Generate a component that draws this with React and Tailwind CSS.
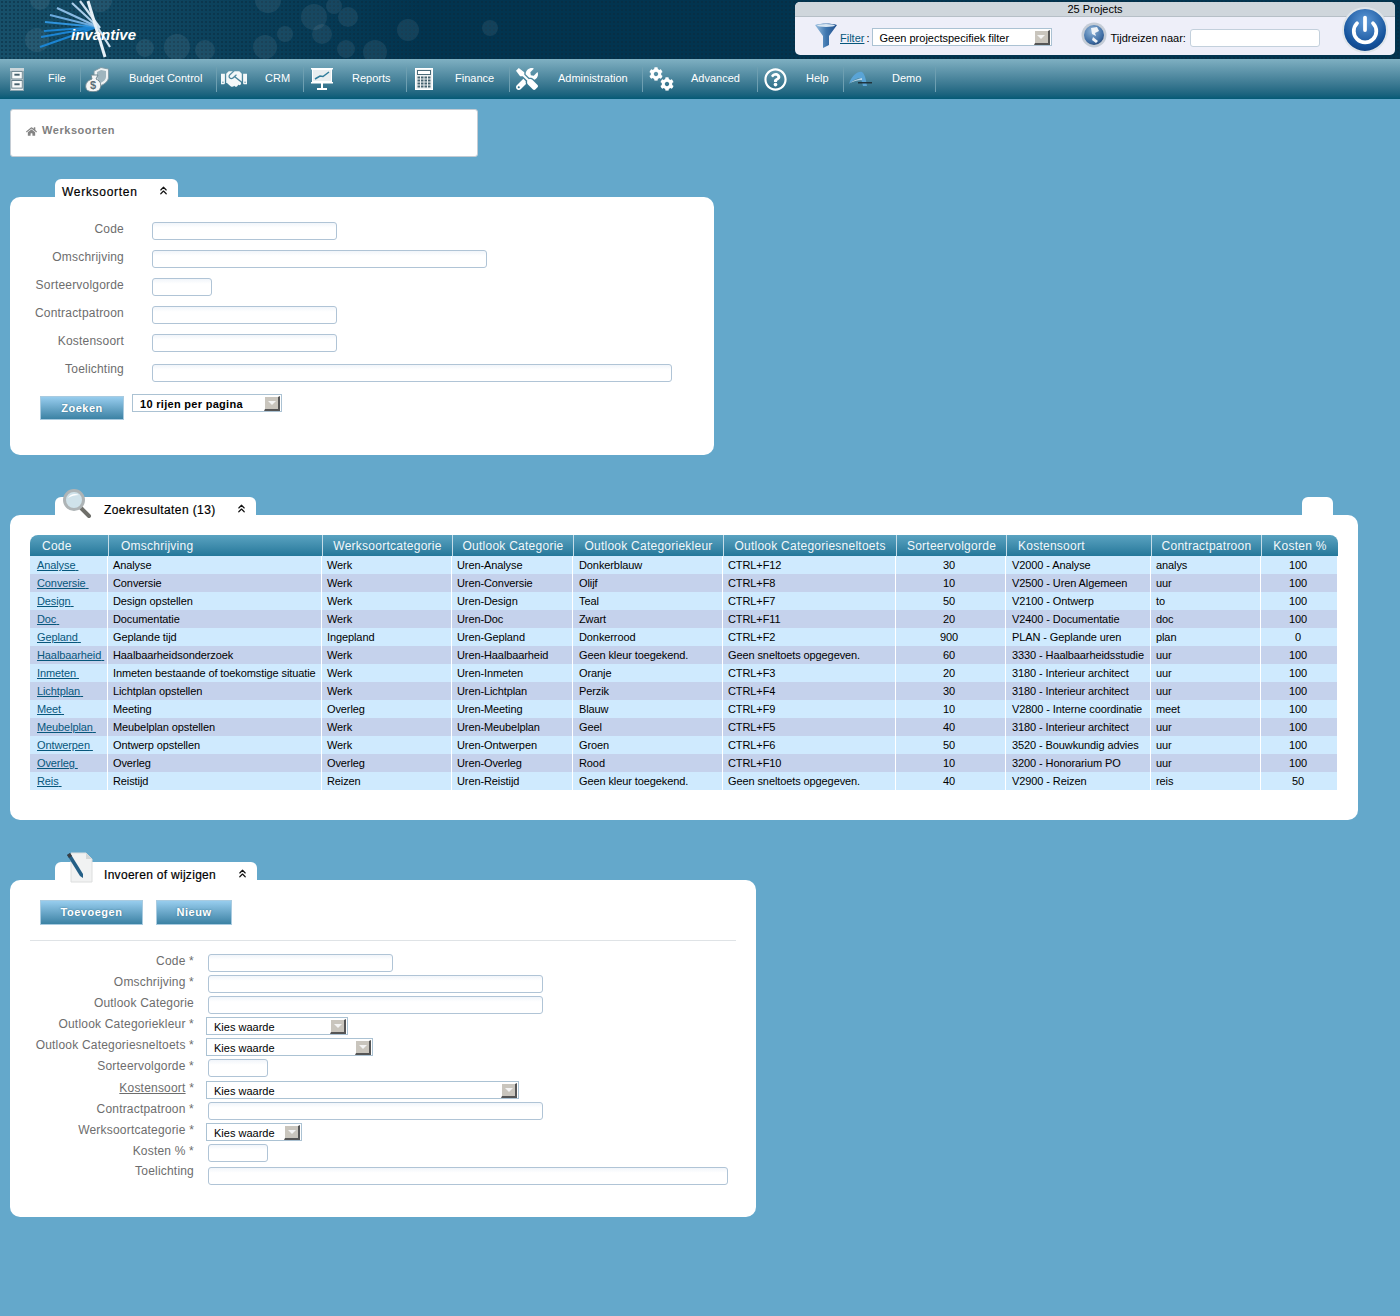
import { ChevronsUp, Power } from 'lucide-react';
import { FaHandshake, FaHome, FaTools, FaCog, FaRegQuestionCircle } from 'react-icons/fa';

const font = { fontFamily: '"Liberation Sans", Arial, sans-serif' };

const rows = [
  ['Analyse', 'Analyse', 'Werk', 'Uren-Analyse', 'Donkerblauw', 'CTRL+F12', '30', 'V2000 - Analyse', 'analys', '100'],
  ['Conversie', 'Conversie', 'Werk', 'Uren-Conversie', 'Olijf', 'CTRL+F8', '10', 'V2500 - Uren Algemeen', 'uur', '100'],
  ['Design', 'Design opstellen', 'Werk', 'Uren-Design', 'Teal', 'CTRL+F7', '50', 'V2100 - Ontwerp', 'to', '100'],
  ['Doc', 'Documentatie', 'Werk', 'Uren-Doc', 'Zwart', 'CTRL+F11', '20', 'V2400 - Documentatie', 'doc', '100'],
  ['Gepland', 'Geplande tijd', 'Ingepland', 'Uren-Gepland', 'Donkerrood', 'CTRL+F2', '900', 'PLAN - Geplande uren', 'plan', '0'],
  ['Haalbaarheid', 'Haalbaarheidsonderzoek', 'Werk', 'Uren-Haalbaarheid', 'Geen kleur toegekend.', 'Geen sneltoets opgegeven.', '60', '3330 - Haalbaarheidsstudie', 'uur', '100'],
  ['Inmeten', 'Inmeten bestaande of toekomstige situatie', 'Werk', 'Uren-Inmeten', 'Oranje', 'CTRL+F3', '20', '3180 - Interieur architect', 'uur', '100'],
  ['Lichtplan', 'Lichtplan opstellen', 'Werk', 'Uren-Lichtplan', 'Perzik', 'CTRL+F4', '30', '3180 - Interieur architect', 'uur', '100'],
  ['Meet', 'Meeting', 'Overleg', 'Uren-Meeting', 'Blauw', 'CTRL+F9', '10', 'V2800 - Interne coordinatie', 'meet', '100'],
  ['Meubelplan', 'Meubelplan opstellen', 'Werk', 'Uren-Meubelplan', 'Geel', 'CTRL+F5', '40', '3180 - Interieur architect', 'uur', '100'],
  ['Ontwerpen', 'Ontwerp opstellen', 'Werk', 'Uren-Ontwerpen', 'Groen', 'CTRL+F6', '50', '3520 - Bouwkundig advies', 'uur', '100'],
  ['Overleg', 'Overleg', 'Overleg', 'Uren-Overleg', 'Rood', 'CTRL+F10', '10', '3200 - Honorarium PO', 'uur', '100'],
  ['Reis', 'Reistijd', 'Reizen', 'Uren-Reistijd', 'Geen kleur toegekend.', 'Geen sneltoets opgegeven.', '40', 'V2900 - Reizen', 'reis', '50'],
];

const columns = [
  { name: 'Code', width: 'w-[78px]', head: 'rounded-tl-[8px] pl-[12px] text-left', cell: 'pl-[7px]' },
  { name: 'Omschrijving', width: 'w-[214px]', head: 'border-l pl-[12px] text-left', cell: 'pl-[5px]' },
  { name: 'Werksoortcategorie', width: 'w-[130px]', head: 'border-l', cell: 'pl-[5px]' },
  { name: 'Outlook Categorie', width: 'w-[121px]', head: 'border-l', cell: 'pl-[5px]' },
  { name: 'Outlook Categoriekleur', width: 'w-[150px]', head: 'border-l', cell: 'pl-[6px]' },
  { name: 'Outlook Categoriesneltoets', width: 'w-[173px]', head: 'border-l', cell: 'pl-[5px]' },
  { name: 'Sorteervolgorde', width: 'w-[110px]', head: 'border-l', cell: 'pr-[3px] text-center' },
  { name: 'Kostensoort', width: 'w-[145px]', head: 'border-l pl-[11px] text-left', cell: 'pl-[6px]' },
  { name: 'Contractpatroon', width: 'w-[110px]', head: 'border-l', cell: 'pl-[5px]' },
  { name: 'Kosten %', width: 'w-[77px]', head: 'rounded-tr-[8px] border-l', cell: 'pr-[2px] text-center' },
];

const CabinetIcon = () => (
  <svg width="14" height="23" viewBox="0 0 16 24" preserveAspectRatio="none">
    <rect x="0.5" y="0.5" width="15" height="23" fill="#e9eef0" stroke="#8aa4ae" />
    <rect x="0" y="0" width="16" height="3" fill="#cdd7db" />
    <rect x="2" y="3.5" width="12" height="8" fill="#f8fafa" stroke="#5b7784" />
    <rect x="5" y="6" width="6" height="2" fill="#46606d" />
    <rect x="2" y="13" width="12" height="8" fill="#f8fafa" stroke="#5b7784" />
    <rect x="5" y="16" width="6" height="2" fill="#46606d" />
  </svg>
);

const MoneyIcon = () => (
  <svg width="24" height="25" viewBox="0 0 24 25">
    <path d="M9 4 L16 0.500 L23.500 2 V10 C23.500 14 20 17 15 19 C11 16 9 12 9 8 Z" fill="#eef2f3" stroke="#7f9aa5" />
    <path d="M12 5 L16 3 L21 4 V10 C21 12.500 18.500 14.500 15.500 16 C13 14 12 11 12 8.500 Z" fill="#9fb5be" />
    <path d="M6 8 L13 8 L11 12 C16 14 17 19 14.500 22.500 C12 25.500 4 25.500 1.500 22.500 C-0.500 18.500 1 14 7 12 Z" fill="#f4f5f5" stroke="#6d8791" />
    <text x="5" y="22" fontSize="11" fontWeight="bold" fill="#5a6d75" style={font}>$</text>
  </svg>
);

const ChartIcon = () => (
  <svg width="22" height="22" viewBox="0 0 22 22">
    <rect x="0" y="0" width="22" height="1.500" fill="#fff" />
    <rect x="1.500" y="1.500" width="19" height="12" fill="#e8eef0" stroke="#fff" />
    <path d="M4 11 L9 8 L12 8.500 L18 4" stroke="#2f7d9c" strokeWidth="1.500" fill="none" />
    <rect x="0" y="14" width="22" height="1.500" fill="#fff" />
    <rect x="10" y="15" width="2" height="5" fill="#fff" />
    <rect x="6" y="20" width="10" height="2" fill="#fff" />
  </svg>
);

const CalculatorIcon = () => (
  <svg width="18" height="22" viewBox="0 0 18 22">
    <rect x="0.500" y="0.500" width="17" height="21" fill="#eef2f3" stroke="#fff" />
    <rect x="2.500" y="2.500" width="13" height="4" fill="#fff" stroke="#4a6a78" />
    {[8.5, 11.5, 14.5, 17.5].map((y) =>
      [2.5, 6, 9.5, 13].map((x) => <rect key={`${x}-${y}`} x={x} y={y} width="2.500" height="2" fill="#45626f" />)
    )}
  </svg>
);

const DemoIcon = () => (
  <svg width="24" height="16" viewBox="0 0 24 16">
    <path d="M1 13 C4 4 10 0 14 1 C17 3 18 9 19 15 L15 15 C14 10 13 7 11 7 C7 8 4 10 1 13 Z" fill="#5aa4d6" />
    <path d="M2 12 C6 9 10 8 14 7 L14 9 C10 9 6 10 2 12 Z" fill="#bcd8ea" />
    <rect x="10" y="11" width="14" height="1.500" fill="#20343e" />
  </svg>
);

const FunnelIcon = () => (
  <svg width="22" height="25" viewBox="0 0 22 25">
    <defs>
      <linearGradient id="funnel" x1="0" y1="0" x2="1" y2="0">
        <stop offset="0" stopColor="#9cc1e2" />
        <stop offset="0.5" stopColor="#3f77b0" />
        <stop offset="1" stopColor="#214f8c" />
      </linearGradient>
    </defs>
    <path d="M0 2 C6 0 16 0 22 2 L14 13 V22 L8 25 V13 Z" fill="url(#funnel)" />
    <ellipse cx="11" cy="2.500" rx="9" ry="1.500" fill="#d8e6f2" />
  </svg>
);

const GlobeIcon = () => (
  <svg width="26" height="26" viewBox="0 0 26 26">
    <defs>
      <radialGradient id="globe" cx="0.4" cy="0.3" r="0.8">
        <stop offset="0" stopColor="#8fb4d8" />
        <stop offset="0.7" stopColor="#3f6ea5" />
        <stop offset="1" stopColor="#1e3d6a" />
      </radialGradient>
    </defs>
    <circle cx="13" cy="13" r="12.500" fill="#c4ccd6" />
    <circle cx="13" cy="13" r="10" fill="url(#globe)" />
    <path d="M10 6 L16 5 L18 9 L14 11 L15 14 L11 12 Z M12 15 L17 19 L15 21 L11 18 Z" fill="#eef3f8" />
  </svg>
);

const MagnifierIcon = () => (
  <svg width="30" height="31" viewBox="0 0 30 31">
    <line x1="18" y1="19" x2="27" y2="28" stroke="#6f6f6a" strokeWidth="4" strokeLinecap="round" />
    <circle cx="12" cy="12" r="9.500" fill="#cfe2ea" stroke="#aeb4b6" strokeWidth="3" />
    <path d="M6 10 C8 6 13 5 17 7 C13 7 9 8 6 10 Z" fill="#fff" />
  </svg>
);

const PenDocIcon = () => (
  <svg width="28" height="31" viewBox="0 0 28 31">
    <path d="M5 1 H20 L26 7 V30 H5 Z" fill="#f1f2f2" stroke="#dcdede" />
    <path d="M20 1 V7 H26 Z" fill="#d5d8d8" />
    <path d="M1 3 L4 1 L17 22 L17 26 L14 24 Z" fill="#245f86" />
    <path d="M1 3 L4 1 L6 4 L3 6 Z" fill="#3a3f44" />
  </svg>
);

const LogoIcon = () => (
  <svg width="100" height="58" viewBox="0 0 100 58" className="absolute left-[38px] top-0">
    <g fill="none" strokeWidth="2.200">
      <path d="M59 27 L2 47" stroke="#1c84d2" />
      <path d="M59 27 L3 37" stroke="#1c84d2" />
      <path d="M59 27 L6 31" stroke="#1c84d2" />
      <path d="M59 27 L7 22" stroke="#2f93dc" />
      <path d="M60 27 L12 15" stroke="#6aa9dd" />
      <path d="M60 27 L19 8" stroke="#8abbe4" />
      <path d="M61 28 L34 3" stroke="#a9cdea" />
      <path d="M62 28 L42 1" stroke="#cfe2f1" />
      <path d="M50 1 L67 57" stroke="#e6f0f7" strokeWidth="3" />
      <path d="M60 28 L72 47" stroke="#cfe2f1" />
    </g>
  </svg>
);

function AdvancedGears() {
  return (
    <span className="relative block h-[24px] w-[25px]">
      <FaCog size={14} color="#fff" className="absolute left-0 top-0" />
      <FaCog size={14} color="#fff" className="absolute bottom-0 right-0" />
    </span>
  );
}

const navItems = [
  { label: 'File', width: 'w-[81px]', icon: <CabinetIcon />, slot: 'pr-[14px]' },
  { label: 'Budget Control', width: 'w-[136px]', icon: <MoneyIcon />, slot: 'pr-[16px]' },
  { label: 'CRM', width: 'w-[87px]', icon: <FaHandshake size={26} color="#f4f8f9" />, slot: 'pr-[14px]' },
  { label: 'Reports', width: 'w-[103px]', icon: <ChartIcon />, slot: 'pr-[12px]' },
  { label: 'Finance', width: 'w-[103px]', icon: <CalculatorIcon />, slot: 'pr-[15px]' },
  { label: 'Administration', width: 'w-[133px]', icon: <FaTools size={22} color="#fff" />, slot: 'pr-[14px]' },
  { label: 'Advanced', width: 'w-[115px]', icon: <AdvancedGears />, slot: 'pr-[12px]' },
  { label: 'Help', width: 'w-[86px]', icon: <FaRegQuestionCircle size={23} color="#fff" />, slot: 'pr-[13px]' },
  { label: 'Demo', width: 'w-[92px]', icon: <DemoIcon />, slot: 'pr-[17px]' },
];

const SelectBox = ({ width, text, bold }) => (
  <div className={`${width} h-[18px] flex items-center justify-between border border-[#abc2d3] bg-white pl-[7px] pr-[1px]`}>
    <span className={`pt-[2px] text-[11px] text-black ${bold ? 'font-bold tracking-[0.3px]' : ''}`}>{text}</span>
    <span className="flex h-[15px] w-[16px] items-center justify-center border-t border-l border-t-white border-l-white border-b-2 border-r-2 border-b-[#555] border-r-[#555] bg-[#c9c5bd]">
      <span className="h-0 w-0 border-x-[4px] border-t-[4px] border-x-transparent border-t-[#f4f4f4]" />
    </span>
  </div>
);

const TextInput = ({ width }) => (
  <div className={`${width} h-[18px] rounded-[3px] border border-[#b0c4d6] bg-gradient-to-b from-[#f1f5fa] to-white to-30%`} />
);

const Button = ({ width, height = 'h-[25px]', children }) => (
  <button className={`${width} ${height} border border-[#a9cbe0] bg-gradient-to-b from-[#97cdee] to-[#3b82a4] text-[11px] font-bold tracking-[0.5px] text-white [text-shadow:0_0_2px_#35708c]`}>
    {children}
  </button>
);

const Tab = ({ width, title, icon, padding, tracking }) => (
  <div className={`${width} relative flex h-[18px] items-start justify-between rounded-t-[6px] bg-white ${padding} pr-[8px] pt-[6px]`}>
    {icon}
    <span className={`text-[12px] leading-[14px] text-black [-webkit-text-stroke:0.2px_black] ${tracking}`}>{title}</span>
    <ChevronsUp size={13} strokeWidth={2.2} color="#111" className="-mt-[1px]" />
  </div>
);

const labelClass = 'text-right text-[12px] leading-[14px] tracking-[0.2px] text-[#6d6d6d]';

const searchFields = [
  { label: 'Code', width: 'w-[185px]' },
  { label: 'Omschrijving', width: 'w-[335px]' },
  { label: 'Sorteervolgorde', width: 'w-[60px]' },
  { label: 'Contractpatroon', width: 'w-[185px]' },
  { label: 'Kostensoort', width: 'w-[185px]' },
];

const editFields = [
  { label: 'Code *', input: 'w-[185px]' },
  { label: 'Omschrijving *', input: 'w-[335px]' },
  { label: 'Outlook Categorie', input: 'w-[335px]' },
  { label: 'Outlook Categoriekleur *', select: 'w-[142px]' },
  { label: 'Outlook Categoriesneltoets *', select: 'w-[167px]' },
  { label: 'Sorteervolgorde *', input: 'w-[60px]' },
  { label: 'Kostensoort', star: true, select: 'w-[313px]', extra: 'mt-[1px]' },
  { label: 'Contractpatroon *', input: 'w-[335px]' },
  { label: 'Werksoortcategorie *', select: 'w-[96px]' },
  { label: 'Kosten % *', input: 'w-[60px]' },
  { label: 'Toelichting', input: 'w-[520px]', extra: 'mt-[2px]', shift: '-mt-[3px]' },
];

const Bokeh = () => (
  <svg width="800" height="59" viewBox="0 0 800 59" className="absolute left-0 top-0">
    <g fill="#ffffff" fillOpacity="0.07">
      {[
        [37, 40, 12], [314, 17, 13], [334, 6, 8], [348, 17, 10], [322, 34, 10], [346, 49, 9], [375, 52, 12],
        [408, 30, 11], [285, 34, 8], [265, 47, 12], [177, 47, 13], [205, 50, 10], [268, 0, 13], [100, 0, 12],
        [40, 0, 10], [490, 28, 8], [145, 48, 9],
      ].map(([cx, cy, r]) => (
        <circle key={`${cx}-${cy}`} cx={cx} cy={cy} r={r} />
      ))}
    </g>
  </svg>
);

export default function App() {
  return (
    <div className="min-h-[1316px] w-full bg-[#64a8cb]" style={font}>
      <div className="relative flex h-[59px] justify-end overflow-hidden bg-gradient-to-r from-[#17506a] from-0% via-[#02344f] via-30% to-[#02344f]">
        <div className="absolute inset-0 bg-[radial-gradient(#0a2a3e_1px,transparent_1px)] [background-size:4px_4px] opacity-50" />
        <Bokeh />
        <LogoIcon />
        <span className="absolute left-[71px] top-[24px] text-[15px] font-bold italic text-white">invantive</span>

        <div className="relative mr-[5px] mt-[2px] h-[53px] w-[600px] rounded-[5px] bg-[#eeeff9]">
          <div className="h-[15px] rounded-t-[5px] border-b border-[#b6bfc7] bg-[#cfd6dc] text-center text-[11px] leading-[14px] text-black">
            25 Projects
          </div>
          <div className="relative flex items-center pl-[20px] pt-[5px]">
            <FunnelIcon />
            <a href="#" className="ml-[3px] mt-[7px] text-[11px] text-[#07577c] underline">Filter</a>
            <span className="ml-[2px] mr-[2px] mt-[7px] text-[11px] text-black">:</span>
            <div className="mt-[4px]"><SelectBox width="w-[180px]" text="Geen projectspecifiek filter" /></div>
            <span className="ml-[29px]"><GlobeIcon /></span>
            <span className="ml-[4px] mt-[7px] text-[11px] text-black">Tijdreizen naar:</span>
            <div className="ml-[4px] mt-[5px] h-[18px] w-[130px] rounded-[3px] border border-[#c3d0dc] bg-white" />
          </div>
          <div className="absolute left-[547px] top-[5px] flex h-[46px] w-[46px] items-center justify-center rounded-full border-[2px] border-[#dfe5ea] bg-[radial-gradient(circle_at_50%_30%,#5f9ad8,#15539c_65%,#0c356e)]">
            <Power size={30} strokeWidth={3} color="#fff" />
          </div>
        </div>
      </div>

      <div className="flex h-[40px] items-center bg-gradient-to-b from-[#7fb0c2] to-[#035a76]">
        {navItems.map((item) => (
          <div key={item.label} className={`${item.width} flex h-[25px] shrink-0 items-center border-r border-[#6e9fb1]`}>
            <span className={`flex w-[48px] shrink-0 items-center justify-center ${item.slot}`}>{item.icon}</span>
            <span className="-mt-[2px] whitespace-nowrap text-[11px] text-white">{item.label}</span>
          </div>
        ))}
      </div>

      <div className="px-[10px]">
        <div className="mt-[10px] flex h-[48px] w-[468px] items-start gap-[5px] rounded-[3px] border border-[#c4ccd4] bg-white pl-[15px] pt-[12px]">
          <FaHome size={11} color="#848484" className="mt-[4px]" />
          <span className="text-[11px] font-bold tracking-[0.55px] text-[#7f7f7f]">Werksoorten</span>
        </div>

        <div className="mt-[22px] pl-[45px]">
          <Tab width="w-[123px]" title="Werksoorten" padding="pl-[7px]" tracking="tracking-[0.7px]" />
        </div>
        <div className="h-[258px] w-[704px] rounded-[10px] bg-white pt-[25px]">
          <div className="flex flex-col gap-[10px]">
            {searchFields.map((field) => (
              <div key={field.label} className="flex h-[18px] items-start">
                <label className={`w-[114px] ${labelClass}`}>{field.label}</label>
                <div className="ml-[28px]"><TextInput width={field.width} /></div>
              </div>
            ))}
            <div className="mt-[2px] flex h-[18px] items-start">
              <label className={`-mt-[2px] w-[114px] ${labelClass}`}>Toelichting</label>
              <div className="ml-[28px]"><TextInput width="w-[520px]" /></div>
            </div>
          </div>
          <div className="mt-[12px] flex items-start pl-[30px]">
            <div className="mt-[1px]"><Button width="w-[84px]" height="h-[24px]">Zoeken</Button></div>
            <div className="ml-[8px]"><SelectBox width="w-[150px]" text="10 rijen per pagina" bold /></div>
          </div>
        </div>

        <div className="mt-[42px] flex w-[1348px] justify-between pl-[45px] pr-[25px]">
          <Tab
            width="w-[201px]"
            title="Zoekresultaten (13)"
            padding="pl-[49px]"
            tracking="tracking-[0.4px]"
            icon={<span className="absolute left-[7px] top-[-9px]"><MagnifierIcon /></span>}
          />
          <div className="h-[18px] w-[31px] rounded-t-[6px] bg-white" />
        </div>
        <div className="h-[305px] w-[1348px] rounded-[10px] bg-white px-[20px] pt-[20px]">
          <table className="w-[1308px] table-fixed border-separate border-spacing-0">
            <thead>
              <tr>
                {columns.map((col) => (
                  <th
                    key={col.name}
                    className={`${col.width} ${col.head} h-[21px] whitespace-nowrap border-[#c5dde8] bg-gradient-to-b from-[#5aa3c1] to-[#24789a] text-[12px] font-normal tracking-[0.25px] text-[#f2f8fb]`}
                  >
                    {col.name}
                  </th>
                ))}
              </tr>
            </thead>
            <tbody>
              {rows.map((row, r) => (
                <tr key={row[0]} className={r % 2 === 0 ? 'bg-[#cfeafe]' : 'bg-[#c5d2ec]'}>
                  {row.map((cell, i) => (
                    <td
                      key={i}
                      className={`${columns[i].cell} h-[18px] overflow-hidden whitespace-nowrap border-r border-white py-0 text-[11px] leading-[18px] tracking-[-0.1px] text-black`}
                    >
                      {i === 0 ? <a href="#" className="text-[#07577c] underline">{cell}&nbsp;</a> : cell}
                    </td>
                  ))}
                </tr>
              ))}
            </tbody>
          </table>
        </div>

        <div className="mt-[42px] pl-[45px]">
          <Tab
            width="w-[202px]"
            title="Invoeren of wijzigen"
            padding="pl-[49px]"
            tracking="tracking-[0.3px]"
            icon={<span className="absolute left-[11px] top-[-10px]"><PenDocIcon /></span>}
          />
        </div>
        <div className="h-[337px] w-[746px] rounded-[10px] bg-white px-[20px] pt-[20px]">
          <div className="flex gap-[13px] pl-[10px]">
            <Button width="w-[103px]">Toevoegen</Button>
            <Button width="w-[76px]">Nieuw</Button>
          </div>
          <div className="mt-[15px] w-[706px] border-t border-[#dfe3e6]" />
          <div className="-ml-[20px] mt-[13px] flex flex-col gap-[3px]">
            {editFields.map((field) => (
              <div key={field.label} className={`flex h-[18px] items-start ${field.extra || ''}`}>
                <label className={`w-[184px] whitespace-nowrap ${labelClass} ${field.shift || ''}`}>
                  {field.star ? <><span className="underline">{field.label}</span> *</> : field.label}
                </label>
                {field.input ? (
                  <div className="ml-[14px]"><TextInput width={field.input} /></div>
                ) : (
                  <div className="ml-[12px]"><SelectBox width={field.select} text="Kies waarde" /></div>
                )}
              </div>
            ))}
          </div>
        </div>
      </div>
    </div>
  );
}
